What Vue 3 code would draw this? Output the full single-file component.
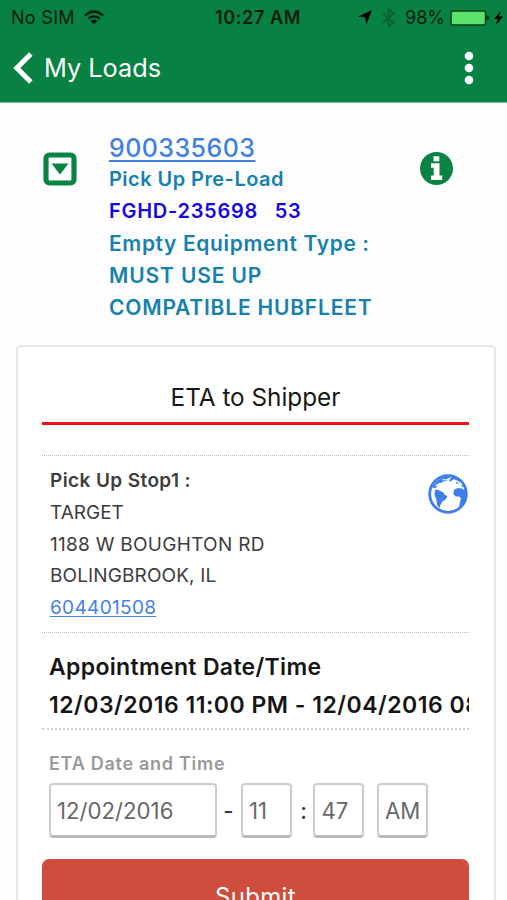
<script setup>
const address = ['TARGET', '1188 W BOUGHTON RD', 'BOLINGBROOK, IL']
</script>

<template>
  <div class="screen">
    <header>
      <div class="status">
        <div class="carrier">
          <span>No SIM</span>
          <svg width="20" height="15" viewBox="0 0 20 15" fill="none" stroke="#071d0f" stroke-width="2.3">
            <path d="M1 5.5Q10-2.4 19 5.5M4.2 8.7Q10 3.8 15.8 8.7" />
            <path d="M6.6 10.9Q10 8.2 13.4 10.9L10 14.2Z" fill="#071d0f" stroke="none" />
          </svg>
        </div>
        <strong class="clock">10:27 AM</strong>
        <div class="indicators">
          <svg class="arrow" width="14" height="15" viewBox="0 0 14 15"><path d="M14 0L8.3 14.5 7.2 7.2 0 6.8Z" fill="#000" /></svg>
          <svg class="bluetooth" width="13" height="20" viewBox="0 0 13 20" fill="none" stroke="#07602d" stroke-width="1.7"><path d="M1 5.5L11.5 14.4 6.5 18.7V1.3L11.5 5.6 1 14.5" /></svg>
          <span class="percent">98%</span>
          <svg class="battery" width="40" height="16" viewBox="0 0 40 16">
            <rect x="1" y="1" width="34.5" height="14" rx="2" fill="#5be36b" stroke="#063f1c" stroke-width="1.5" />
            <path d="M36.5 5.5Q39.5 6 39.5 8T36.5 10.5Z" fill="#042c14" />
          </svg>
          <svg class="bolt" width="9" height="14" viewBox="0 0 9 14"><path d="M6.8 0L0 8H3.7L2 14 9 5.6H5.2Z" fill="#000" /></svg>
        </div>
      </div>
      <nav>
        <svg width="20" height="32" viewBox="0 0 20 32" fill="none" stroke="#fff" stroke-width="5"><path d="M17.8 2L3.8 16 17.8 30" /></svg>
        <h1>My Loads</h1>
        <svg class="menu" width="10" height="34" viewBox="0 0 10 34" fill="#fff"><circle cx="5" cy="5" r="4.3" /><circle cx="5" cy="17" r="4.3" /><circle cx="5" cy="29" r="4.3" /></svg>
      </nav>
    </header>

    <section class="load">
      <svg class="toggle" width="34" height="34" viewBox="0 0 34 34"><rect x="3" y="3" width="28" height="28" rx="3.5" fill="#fff" stroke="#088343" stroke-width="5.2" /><path d="M8.5 11.5H25.5L17 22.5Z" fill="#088343" /></svg>
      <div class="summary">
        <a class="number">900335603</a>
        <span class="state">Pick Up Pre-Load</span>
        <span class="unit">FGHD-235698 <b>53</b></span>
        <span class="type">Empty Equipment Type :</span>
        <span class="must">MUST USE UP</span>
        <span class="fleet">COMPATIBLE HUBFLEET</span>
      </div>
      <svg class="info" width="33" height="33" viewBox="0 0 33 33"><circle cx="16.5" cy="16.5" r="16.5" fill="#088343" /><path d="M13.5 4.2H19.3V9.2H13.5ZM11 11.3H19.5V23.5H22.2V28H11V23.5H13.7V15.7H11Z" fill="#fff" /></svg>
    </section>

    <main class="card">
      <h2>ETA to Shipper</h2>
      <section class="stop">
        <div class="address">
          <strong>Pick Up Stop1 :</strong>
          <span v-for="(line, i) in address" :key="line" :class="'line' + i">{{ line }}</span>
          <a>604401508</a>
        </div>
        <svg class="globe" width="40" height="40" viewBox="0 0 40 40">
          <circle cx="20" cy="20" r="18.3" fill="#fff" stroke="#3d7eea" stroke-width="2.8" />
          <path d="M7 16L9.5 15.5 12 17 15 18 16 20 19.5 22.5 17.5 25.5 14 28 12.5 31 11.5 34 9 31 8.5 26 6.5 21Z" fill="#3d7eea" />
          <path d="M38 17L34 14.5 29.5 14 26 16 25.3 20 27.5 22.5 31 22.5 33 24 32 28 31 33 37 27Z" fill="#3d7eea" />
          <path d="M4 13L10 6 16 3 24 2 31 5 37 12 34 13 31 9.5 28 10 29 7 26 5 22.5 7.5 20 6 17 7.5 14 7 15 8.5 11 9 9.5 12 7 14.5Z" fill="#3d7eea" />
          <path d="M14.5 5.5L18 6 22 4 20.5 6.5M28.5 6.5L34 11.5 32 8M7.5 12L10.5 10 13 11" fill="none" stroke="#fff" stroke-width="1.1" />
        </svg>
      </section>
      <section class="appointment">
        <div class="caption">Appointment Date/Time</div>
        <div class="range">12/03/2016 11:00 PM - 12/04/2016 08:</div>
      </section>
      <label>ETA Date and Time</label>
      <div class="fields">
        <div class="field date">12/02/2016</div><i>-</i>
        <div class="field hour">11</div><i>:</i>
        <div class="field minute">47</div>
        <div class="field period">AM</div>
      </div>
      <button>Submit</button>
    </main>
  </div>
</template>

<style>
body { margin: 0; background: #fdfdfd; }
</style>

<style scoped>
* { box-sizing: border-box; }
.screen { width: 507px; height: 900px; overflow: hidden; background: #fdfdfd; font-family: Inter, sans-serif; color: #3d3d3d; white-space: nowrap; }
header { height: 103px; background: #088242; border-bottom: 1px solid #83c09f; color: #071d0f; }
.status { height: 35px; display: grid; grid-template-columns: 1fr auto 1fr; align-items: center; padding: 0 4px 0 11px; font-size: 18px; }
.carrier, .indicators { display: flex; align-items: center; }
.carrier { gap: 9px; letter-spacing: .3px; }
.clock { padding-left: 2px; font-weight: 600; letter-spacing: .6px; }
.indicators { justify-content: flex-end; }
.arrow { margin-right: 10px; }
.bluetooth { margin-right: 10px; }
.percent { margin-right: 5px; }
.battery { margin-right: 4px; }
nav { height: 66px; display: flex; align-items: center; padding: 0 33px 0 13px; color: #fff; }
h1 { margin: -2px auto 0 11px; font-size: 25.3px; font-weight: 400; }
.load { height: 242px; display: flex; align-items: flex-start; padding: 30px 54px 0 43px; }
.toggle { margin-top: 19px; }
.info { margin: 19px 0 0 auto; }
.summary { margin-left: 32px; display: flex; flex-direction: column; align-items: flex-start; font-size: 21px; line-height: 32px; font-weight: 600; color: #1681ad; }
.number { height: 30px; line-height: 31px; font-size: 25px; font-weight: 500; letter-spacing: .45px; color: #427fe5; text-decoration: underline; text-decoration-thickness: 2px; text-underline-offset: 3px; }
.state, .unit { font-size: 20px; letter-spacing: .45px; }
.unit { color: #1607dc; letter-spacing: .72px; }
.unit b { font-weight: 600; margin-left: 11px; }
.type { margin-top: 1px; letter-spacing: .63px; }
.must { letter-spacing: .85px; }
.fleet { letter-spacing: .8px; }
.card { width: 480px; height: 600px; margin-left: 16px; padding: 24px 25px 0 24px; background: #fff; border: 2px solid #e8e8e8; border-radius: 5px; }
h2 { margin: 0 0 30px; height: 54px; border-bottom: 3px solid #f01419; text-align: center; font-size: 24.3px; line-height: 52px; font-weight: 400; color: #171717; }
.stop { height: 178px; border-top: 1px dotted #bbb; border-bottom: 1px dotted #bbb; display: flex; justify-content: space-between; padding: 9px 1px 0 8px; }
.address { display: flex; flex-direction: column; align-items: flex-start; font-size: 19px; line-height: 31.8px; }
.address strong { font-weight: 600; letter-spacing: .4px; }
.line1 { letter-spacing: .28px; }
.line2 { letter-spacing: .12px; }
.address a { letter-spacing: .33px; color: #4382e8; text-decoration: underline; text-underline-offset: 2px; }
.globe { margin-top: 9px; }
.appointment { height: 97px; padding: 15px 0 0 7px; overflow: hidden; border-bottom: 2px dotted #ccc; font-size: 23px; line-height: 38px; font-weight: 600; color: #151515; }
.caption { letter-spacing: .33px; }
.range { letter-spacing: .5px; }
label { display: block; margin: 19px 0 4px 7px; height: 30px; line-height: 30px; font-size: 18px; font-weight: 600; letter-spacing: .72px; color: #999; }
.fields { display: flex; padding-left: 6.5px; font-size: 22.2px; }
.field { height: 55px; border: 2px solid #ccc; border-bottom: 3px solid #bbb; border-radius: 4px; padding-left: 6.5px; line-height: 51px; color: #686868; }
.date { width: 168px; }
.hour, .minute, .period { width: 51px; }
.period { margin-left: 12.5px; }
i { width: 24px; line-height: 55px; text-align: center; font-style: normal; font-weight: 500; }
i + .minute { margin-left: -2.5px; }
button { display: block; width: 427px; height: 74px; margin: 21px 0 0; padding: 0; border: 0; border-radius: 7px; background: #cf4d3c; color: #fff; font: 400 24px Inter, sans-serif; letter-spacing: .3px; }
</style>
